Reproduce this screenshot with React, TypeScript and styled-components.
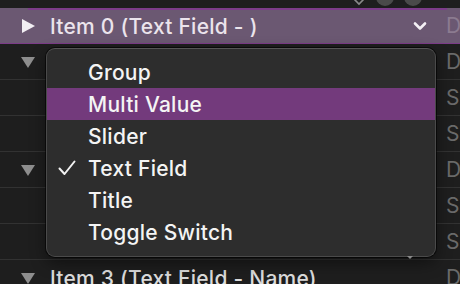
import React from 'react'
import styled, { createGlobalStyle } from 'styled-components'

const GlobalStyle = createGlobalStyle`
  html, body {
    margin: 0;
    padding: 0;
    background: #1e1e1e;
    overflow: hidden;
  }
  body {
    font-family: Inter, "Liberation Sans", sans-serif;
    -webkit-font-smoothing: antialiased;
  }
`

interface RowData {
  kind: 'selected' | 'group' | 'plain'
  label?: string
  tag: string
}

const ROWS: RowData[] = [
  { kind: 'selected', label: 'Item 0 (Text Field - )', tag: 'D' },
  { kind: 'group', tag: 'D' },
  { kind: 'plain', tag: 'S' },
  { kind: 'plain', tag: 'S' },
  { kind: 'group', tag: 'D' },
  { kind: 'plain', tag: 'S' },
  { kind: 'plain', tag: 'S' },
  { kind: 'group', label: 'Item 3 (Text Field - Name)', tag: 'D' },
]

const OPTIONS = ['Group', 'Multi Value', 'Slider', 'Text Field', 'Title', 'Toggle Switch']
const CHECKED = 'Text Field'
const HOVERED = 'Multi Value'

const Disclosure = ({ open, light }: { open: boolean; light?: boolean }) => (
  <svg width="16" height="16" viewBox="0 0 16 16">
    {open ? (
      <path d="M1 3 L15 3 L8 14 Z" fill={light ? '#f2eef3' : '#8e8e8e'} />
    ) : (
      <path d="M2 1 L15 8 L2 15 Z" fill={light ? '#f2eef3' : '#8e8e8e'} />
    )}
  </svg>
)

const Chevron = () => (
  <svg width="14" height="10" viewBox="0 0 14 10">
    <path d="M2 2.5 L7 7.5 L12 2.5" fill="none" stroke="#f4f0f5" strokeWidth="2.6" strokeLinecap="round" strokeLinejoin="round" />
  </svg>
)

const Check = () => (
  <svg width="18" height="16" viewBox="0 0 18 16">
    <path d="M1.5 8.5 L6.5 14 L16.5 1.5" fill="none" stroke="#f2f2f2" strokeWidth="2" strokeLinecap="round" strokeLinejoin="round" />
  </svg>
)

const App: React.FC = () => {
  return (
    <>
      <GlobalStyle />
      <Screen>
        <TopStrip>
          <TopIcons>
            <svg width="14" height="8" viewBox="0 0 14 8">
              <path d="M1 0 L7 6 L13 0" fill="none" stroke="#8a8a8a" strokeWidth="1.6" />
            </svg>
            <Dot />
            <Dot />
          </TopIcons>
        </TopStrip>
        <List>
          {ROWS.map((row, i) => (
            <Row key={i} selected={row.kind === 'selected'}>
              <Lead>
                {row.kind === 'selected' && <Disclosure open={false} light />}
                {row.kind === 'group' && <Disclosure open />}
              </Lead>
              <Label selected={row.kind === 'selected'}>{row.label}</Label>
              {row.kind === 'selected' && (
                <ChevronSlot>
                  <Chevron />
                </ChevronSlot>
              )}
              <Tag selected={row.kind === 'selected'}>{row.tag}</Tag>
            </Row>
          ))}
        </List>
        <Menu>
          {OPTIONS.map((opt) => (
            <MenuItem key={opt} active={opt === HOVERED}>
              <CheckSlot>{opt === CHECKED && <Check />}</CheckSlot>
              {opt}
            </MenuItem>
          ))}
        </Menu>
        <SmallArrow />
      </Screen>
    </>
  )
}

const Screen = styled.div`
  position: relative;
  width: 460px;
  height: 284px;
  overflow: hidden;
  background: #1e1e1e;
`

const TopStrip = styled.div`
  height: 8px;
  display: flex;
  justify-content: flex-end;
  padding-right: 38px;
`

const TopIcons = styled.div`
  display: flex;
  align-items: flex-end;
  gap: 10px;
  margin-top: -8px;
  height: 14px;
`

const Dot = styled.div`
  width: 18px;
  height: 18px;
  border-radius: 50%;
  background: #4a4a4a;
  margin-top: -4px;
`

const List = styled.div`
  display: flex;
  flex-direction: column;
`

const Row = styled.div<{ selected?: boolean }>`
  position: relative;
  height: 36px;
  box-sizing: border-box;
  display: flex;
  align-items: center;
  background: ${(p) => (p.selected ? '#6b5872' : 'transparent')};
  border-bottom: 1px solid ${(p) => (p.selected ? '#7b3c88' : '#323232')};

  ${(p) =>
    p.selected &&
    `
    &::before {
      content: "";
      position: absolute;
      top: 0;
      left: 28px;
      right: 13px;
      height: 2px;
      background: #7c3c89;
    }
  `}
`

const Lead = styled.div`
  width: 50px;
  padding-left: 20px;
  box-sizing: border-box;
  display: flex;
  align-items: center;
`

const Label = styled.div<{ selected?: boolean }>`
  flex: 1;
  font-size: 21px;
  font-weight: 500;
  letter-spacing: 0.25px;
  color: ${(p) => (p.selected ? '#ebe4ec' : '#dcdcdc')};
  white-space: nowrap;
  padding-top: 1px;
`

const ChevronSlot = styled.div`
  width: 31px;
  display: flex;
  align-items: center;
  justify-content: flex-start;
`

const Tag = styled.div<{ selected?: boolean }>`
  width: 14px;
  align-self: stretch;
  display: flex;
  align-items: center;
  font-size: 21px;
  color: ${(p) => (p.selected ? '#8b7b90' : '#6a6a6a')};
  padding-left: 2px;
  overflow: hidden;
`

const Menu = styled.div`
  position: absolute;
  left: 46px;
  top: 48px;
  width: 390px;
  box-sizing: border-box;
  padding: 7px 0 8px;
  background: #2d2d2d;
  border: 1px solid #4a4a4a;
  border-top-color: #555;
  border-radius: 9px;
  box-shadow: 0 6px 16px rgba(0, 0, 0, 0.45), 0 0 0 1px rgba(0, 0, 0, 0.6);
  display: flex;
  flex-direction: column;
`

const MenuItem = styled.div<{ active?: boolean }>`
  height: 32px;
  display: flex;
  align-items: center;
  font-size: 21px;
  font-weight: 500;
  letter-spacing: 0.25px;
  color: #f4f4f4;
  background: ${(p) => (p.active ? '#733a7c' : 'transparent')};
`

const CheckSlot = styled.div`
  width: 41px;
  padding-left: 11px;
  box-sizing: border-box;
  display: flex;
  align-items: center;
`

const SmallArrow = styled.div`
  position: absolute;
  left: 407px;
  top: 256px;
  width: 0;
  height: 0;
  border-left: 3px solid transparent;
  border-right: 3px solid transparent;
  border-top: 3px solid #8a8a8a;
`

export default App
